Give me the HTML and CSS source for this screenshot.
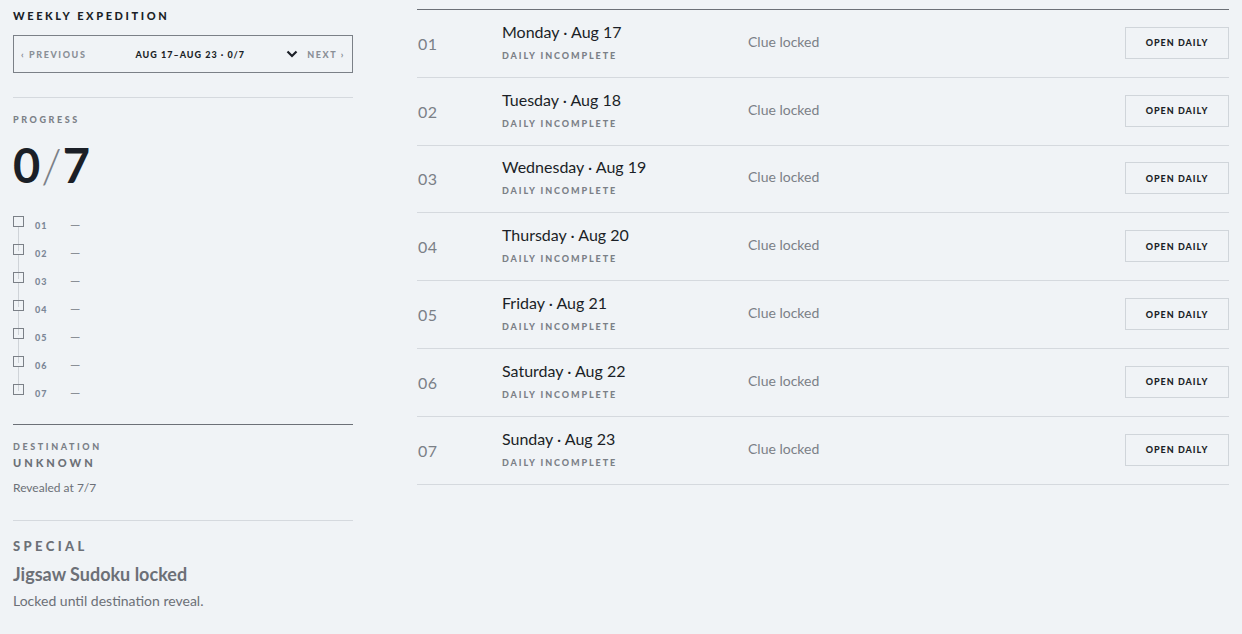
FILE: index.html
```html
<!DOCTYPE html>
<html lang="en">
<head>
    <meta charset="UTF-8">
    <meta name="viewport" content="width=device-width, initial-scale=1.0">
    <title>Weekly Expedition</title>
    <link rel="stylesheet" href="styles.css">
</head>
<body>
    <div class="page">
        <aside class="side">
            <h2 class="side-title">Weekly Expedition</h2>
            <div class="week-nav">
                <span class="nav-link">&lsaquo; Previous</span>
                <span class="week-range">Aug 17&ndash;Aug 23 &middot; 0/7</span>
                <svg class="chev" width="12" height="8" viewBox="0 0 12 8"><path d="M1.5 1.5 6 6l4.5-4.5" fill="none" stroke="#1b1f27" stroke-width="2.2"/></svg>
                <span class="nav-link">Next &rsaquo;</span>
            </div>

            <div class="progress">
                <div class="label">Progress</div>
                <div class="count">0<span class="slash">/</span>7</div>
                <ul class="steps">
                    <li><span class="box"></span><span class="num">01</span><span class="dash">&mdash;</span></li>
                    <li><span class="box"></span><span class="num">02</span><span class="dash">&mdash;</span></li>
                    <li><span class="box"></span><span class="num">03</span><span class="dash">&mdash;</span></li>
                    <li><span class="box"></span><span class="num">04</span><span class="dash">&mdash;</span></li>
                    <li><span class="box"></span><span class="num">05</span><span class="dash">&mdash;</span></li>
                    <li><span class="box"></span><span class="num">06</span><span class="dash">&mdash;</span></li>
                    <li><span class="box"></span><span class="num">07</span><span class="dash">&mdash;</span></li>
                </ul>
            </div>

            <div class="destination">
                <div class="label">Destination</div>
                <div class="dest-name">Unknown</div>
                <p class="note">Revealed at 7/7</p>
            </div>

            <div class="special">
                <div class="special-label">Special</div>
                <h3 class="special-title">Jigsaw Sudoku locked</h3>
                <p class="special-note">Locked until destination reveal.</p>
            </div>
        </aside>

        <main class="days">
            <div class="day">
                <span class="day-num">01</span>
                <div class="day-info"><div class="day-name">Monday &middot; Aug 17</div><div class="day-state">Daily incomplete</div></div>
                <span class="clue">Clue locked</span>
                <button class="open">Open daily</button>
            </div>
            <div class="day">
                <span class="day-num">02</span>
                <div class="day-info"><div class="day-name">Tuesday &middot; Aug 18</div><div class="day-state">Daily incomplete</div></div>
                <span class="clue">Clue locked</span>
                <button class="open">Open daily</button>
            </div>
            <div class="day">
                <span class="day-num">03</span>
                <div class="day-info"><div class="day-name">Wednesday &middot; Aug 19</div><div class="day-state">Daily incomplete</div></div>
                <span class="clue">Clue locked</span>
                <button class="open">Open daily</button>
            </div>
            <div class="day">
                <span class="day-num">04</span>
                <div class="day-info"><div class="day-name">Thursday &middot; Aug 20</div><div class="day-state">Daily incomplete</div></div>
                <span class="clue">Clue locked</span>
                <button class="open">Open daily</button>
            </div>
            <div class="day">
                <span class="day-num">05</span>
                <div class="day-info"><div class="day-name">Friday &middot; Aug 21</div><div class="day-state">Daily incomplete</div></div>
                <span class="clue">Clue locked</span>
                <button class="open">Open daily</button>
            </div>
            <div class="day">
                <span class="day-num">06</span>
                <div class="day-info"><div class="day-name">Saturday &middot; Aug 22</div><div class="day-state">Daily incomplete</div></div>
                <span class="clue">Clue locked</span>
                <button class="open">Open daily</button>
            </div>
            <div class="day">
                <span class="day-num">07</span>
                <div class="day-info"><div class="day-name">Sunday &middot; Aug 23</div><div class="day-state">Daily incomplete</div></div>
                <span class="clue">Clue locked</span>
                <button class="open">Open daily</button>
            </div>
        </main>
    </div>
</body>
</html>
```

FILE: styles.css
```css
body{
    margin: 0;
    background: #f0f3f6;
    color: #1b1f27;
    font-family: Lato, "Noto Sans", sans-serif;
}
.page{
    display: grid;
    grid-template-columns: 340px 1fr;
    column-gap: 64px;
    padding: 9px 13px 0 13px;
}

/* sidebar */
.side-title{
    margin: 0;
    font-size: 11px;
    line-height: 13px;
    font-weight: 900;
    letter-spacing: 2.6px;
    text-transform: uppercase;
}
.week-nav{
    display: flex;
    align-items: center;
    margin-top: 13px;
    height: 36px;
    padding: 0 7px;
    border: 1px solid #7b8087;
}
.nav-link{
    font-size: 9px;
    font-weight: 900;
    letter-spacing: 1.6px;
    color: #8a8f96;
    text-transform: uppercase;
}
.week-range{
    margin-left: 49px;
    font-size: 9px;
    font-weight: 900;
    letter-spacing: 1px;
    text-transform: uppercase;
}
.chev{
    margin-left: auto;
    margin-right: 9px;
}
.label{
    font-size: 9px;
    font-weight: 900;
    letter-spacing: 2.6px;
    color: #7b8087;
    text-transform: uppercase;
}
.progress{
    margin-top: 24px;
    padding-top: 16px;
    border-top: 1px solid #d5d9de;
}
.count{
    margin-top: 15px;
    font-size: 47px;
    line-height: 50px;
    font-weight: 700;
}
.slash{
    font-weight: 300;
    color: #7b8087;
    margin: 0 1px;
}
.steps{
    list-style: none;
    margin: 21px 0 0 0;
    padding: 0;
}
.steps li{
    position: relative;
    display: flex;
    align-items: center;
    height: 28px;
}
.steps li:not(:last-child)::after{
    content: "";
    position: absolute;
    left: 5px;
    top: 16px;
    height: 24px;
    border-left: 1px solid #cfd3d8;
}
.box{
    width: 9px;
    height: 9px;
    border: 1px solid #7b8087;
    margin-top: -8px;
}
.num{
    width: 35px;
    margin-left: 11px;
    font-size: 9px;
    font-weight: 900;
    letter-spacing: 1px;
    color: #7c8797;
}
.dash{
    font-size: 13px;
    color: #8a8f96;
}
.destination{
    margin-top: 17px;
    padding-top: 16px;
    border-top: 1px solid #6c7077;
}
.dest-name{
    margin-top: 4px;
    font-size: 11px;
    font-weight: 900;
    letter-spacing: 3px;
    color: #6c7077;
    text-transform: uppercase;
}
.note{
    margin: 11px 0 0 0;
    font-size: 12px;
    color: #6c7077;
}
.special{
    margin-top: 25px;
    padding-top: 17px;
    border-top: 1px solid #d5d9de;
}
.special-label{
    font-size: 13px;
    font-weight: 900;
    letter-spacing: 3.4px;
    color: #6c7077;
    text-transform: uppercase;
}
.special-title{
    margin: 9px 0 0 0;
    font-size: 18px;
    font-weight: 700;
    color: #6c7077;
}
.special-note{
    margin: 7px 0 0 0;
    font-size: 14px;
    color: #6c7077;
}

/* day list */
.days{
    border-top: 1px solid #6c7077;
}
.day{
    display: grid;
    grid-template-columns: 85px 246px 1fr auto;
    align-items: center;
    height: 66.8px;
    border-bottom: 1px solid #d5d9de;
}
.day-num{
    padding-left: 1px;
    font-size: 16px;
    color: #7b8087;
    letter-spacing: 0.5px;
}
.day-info{
    margin-bottom: 4px;
}
.day-name{
    font-size: 16px;
    line-height: 20px;
}
.day-state{
    margin-top: 8px;
    font-size: 9px;
    line-height: 11px;
    font-weight: 900;
    letter-spacing: 1.9px;
    color: #7b8087;
    text-transform: uppercase;
}
.clue{
    margin-bottom: 4px;
    font-size: 14px;
    color: #7b8087;
}
.open{
    width: 104px;
    height: 32px;
    margin-bottom: 1px;
    background: transparent;
    border: 1px solid #d0d5da;
    font-family: inherit;
    font-size: 9px;
    font-weight: 900;
    letter-spacing: 1px;
    color: #1b1f27;
    text-transform: uppercase;
}
```
